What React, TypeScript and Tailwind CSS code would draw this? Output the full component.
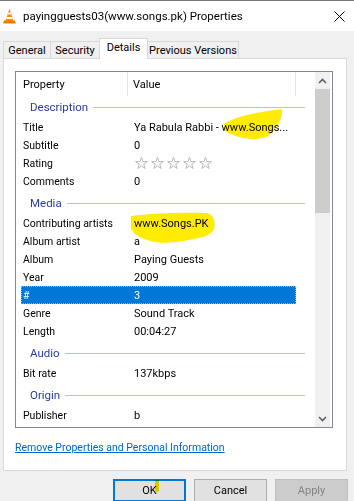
import React from "react";

type Row = { k: string; v?: string; stars?: boolean; sel?: boolean };
type Group = { name: string; rows: Row[] };

const groups: Group[] = [
  {
    name: "Description",
    rows: [
      { k: "Title", v: "Ya Rabula Rabbi - www.Songs..." },
      { k: "Subtitle", v: "0" },
      { k: "Rating", stars: true },
      { k: "Comments", v: "0" },
    ],
  },
  {
    name: "Media",
    rows: [
      { k: "Contributing artists", v: "www.Songs.PK" },
      { k: "Album artist", v: "a" },
      { k: "Album", v: "Paying Guests" },
      { k: "Year", v: "2009" },
      { k: "#", v: "3", sel: true },
      { k: "Genre", v: "Sound Track" },
      { k: "Length", v: "00:04:27" },
    ],
  },
  { name: "Audio", rows: [{ k: "Bit rate", v: "137kbps" }] },
  { name: "Origin", rows: [{ k: "Publisher", v: "b" }] },
];

function Star() {
  return (
    <svg width="13" height="13" viewBox="0 0 13 13">
      <polygon
        points="6.5,0.3 7.97,4.48 12.4,4.58 8.88,7.27 10.14,11.52 6.5,9 2.86,11.52 4.12,7.27 0.6,4.58 5.03,4.48"
        fill="#f7f7f7"
        stroke="#b4b4b4"
        strokeWidth="0.9"
        strokeLinejoin="round"
      />
    </svg>
  );
}

function VlcIcon() {
  return (
    <svg width="13" height="16" viewBox="0 0 13 16" className="ml-[3px] shrink-0">
      <polygon points="1,12.6 12,12.6 12.8,15.6 0.2,15.6" fill="#e87c00" />
      <polygon points="6.5,0.5 10.6,13 2.4,13" fill="#ff8a00" />
      <polygon points="5.22,4.5 7.78,4.5 8.42,6.6 4.58,6.6" fill="#ffffff" />
      <polygon points="3.78,9 9.22,9 9.86,11.1 3.14,11.1" fill="#ffffff" />
    </svg>
  );
}

function CloseIcon() {
  return (
    <svg width="11" height="11" viewBox="0 0 11 11" className="ml-auto mr-[9px] shrink-0">
      <path d="M0.5 0.5 L10.5 10.5 M10.5 0.5 L0.5 10.5" stroke="#000" strokeWidth="1" />
    </svg>
  );
}

function Chevron({ down }: { down?: boolean }) {
  return (
    <svg width="9" height="6" viewBox="0 0 9 6">
      <path
        d={down ? "M1 1 L4.5 4.5 L8 1" : "M1 5 L4.5 1.5 L8 5"}
        stroke="#606060"
        strokeWidth="1.6"
        fill="none"
      />
    </svg>
  );
}

export default function App() {
  return (
    <div className="relative w-[354px] h-[501px] overflow-hidden bg-[#f0f0f0] text-black font-['Roboto','Liberation_Sans',sans-serif] text-[11px] leading-[13px]">
      {/* Title bar */}
      <div className="h-[31px] bg-white border-t border-[#7a7a7a] flex items-center">
        <VlcIcon />
        <span className="ml-[7px] text-[11.5px] leading-[15px]">payingguests03(www.songs.pk) Properties</span>
        <CloseIcon />
      </div>

      {/* Tabs */}
      <div className="relative z-10 mt-[7px] pl-[3px] h-[20px] flex items-end">
        <div className="w-[48px] h-[17px] border-l border-t border-r border-[#d9d9d9] bg-[#f0f0f0] flex items-center justify-center">
          General
        </div>
        <div className="w-[48px] h-[17px] border-t border-[#d9d9d9] bg-[#f0f0f0] flex items-center justify-center">
          Security
        </div>
        <div className="w-[49px] h-[21px] -mb-px border-l border-t border-r border-[#d9d9d9] bg-white flex items-start justify-center pt-[2px]">
          Details
        </div>
        <div className="w-[91px] h-[17px] border-t border-r border-[#d9d9d9] bg-[#f0f0f0] flex items-center justify-center">
          Previous Versions
        </div>
      </div>

      {/* Panel */}
      <div className="ml-[3px] w-[344px] h-[413px] bg-white border border-[#d9d9d9] pt-[12px] pl-[11px]">
        {/* List view */}
        <div className="w-[318px] h-[357px] border border-[#828790] flex overflow-hidden">
          <div className="w-[299px] h-full overflow-hidden">
            {/* Header */}
            <div className="h-[24px] flex">
              <div className="w-[112px] h-full border-r border-[#e5e5e5] pl-[7px] flex items-center">Property</div>
              <div className="w-[168px] h-full border-r border-[#e5e5e5] pl-[5px] flex items-center">Value</div>
            </div>
            {groups.map((g, gi) => (
              <div key={g.name} className={gi === 0 ? "" : "mt-[2px]"}>
                <div className="h-[22px] flex items-center pl-[14px] pr-[10px]">
                  <span className="text-[#2a3ca0] text-[11.5px]">{g.name}</span>
                  <div className="flex-1 h-px bg-[#b3bfe4] ml-[5px]" />
                </div>
                {g.rows.map((r) => (
                  <div
                    key={r.k}
                    className={
                      "ml-[5px] w-[275px] h-[18px] flex items-center " +
                      (r.sel
                        ? "bg-[#0078d7] text-white outline-1 outline-dotted -outline-offset-1 outline-[#ff9a2e]"
                        : "")
                    }
                  >
                    <div className="w-[111px] pl-[2px] whitespace-nowrap text-[10.5px]">{r.k}</div>
                    <div className="flex-1 pl-[2px] whitespace-nowrap overflow-hidden">
                      {r.stars ? (
                        <div className="flex gap-[3px] pl-px">
                          <Star />
                          <Star />
                          <Star />
                          <Star />
                          <Star />
                        </div>
                      ) : (
                        r.v
                      )}
                    </div>
                  </div>
                ))}
              </div>
            ))}
          </div>
          {/* Scrollbar */}
          <div className="w-[15px] h-full bg-[#f0f0f0] flex flex-col">
            <div className="h-[17px] flex items-center justify-center">
              <Chevron />
            </div>
            <div className="h-[124px] bg-[#cdcdcd]" />
            <div className="flex-1" />
            <div className="h-[17px] flex items-center justify-center">
              <Chevron down />
            </div>
          </div>
          <div className="flex-1 bg-white" />
        </div>

        <div className="mt-[13px] text-[#0066cc] underline whitespace-nowrap text-[10.5px]">
          Remove Properties and Personal Information
        </div>
      </div>

      {/* Buttons */}
      <div className="mt-[8px] flex justify-end gap-[8px] pr-[6px]">
        <div className="w-[73px] h-[23px] border-2 border-[#0078d7] bg-[#e1e1e1] flex items-center justify-center">OK</div>
        <div className="w-[73px] h-[23px] border border-[#adadad] bg-[#e1e1e1] flex items-center justify-center">Cancel</div>
        <div className="w-[73px] h-[23px] border border-[#bfbfbf] bg-[#cccccc] text-[#838383] flex items-center justify-center">Apply</div>
      </div>

      {/* Highlighter marks */}
      <svg
        className="absolute left-0 top-0 pointer-events-none mix-blend-multiply"
        width="354"
        height="501"
        viewBox="0 0 354 501"
      >
        <path
          d="M224,124 C232,118 250,113 282,109 L282,114 C280,122 276,130 268,136 C258,141 245,139 236,136 C230,134 226,132 224,130 Z"
          fill="#ffec00"
        />
        <path
          d="M131,216 C150,213 190,212 207,213 C214,215 216,222 214,229 C211,236 200,238 188,240 C175,243 160,244 150,241 C140,238 133,234 131,228 Z"
          fill="#ffec00"
        />
        <rect x="155" y="480" width="4" height="12" rx="1.5" fill="#f0e600" />
      </svg>
    </div>
  );
}
